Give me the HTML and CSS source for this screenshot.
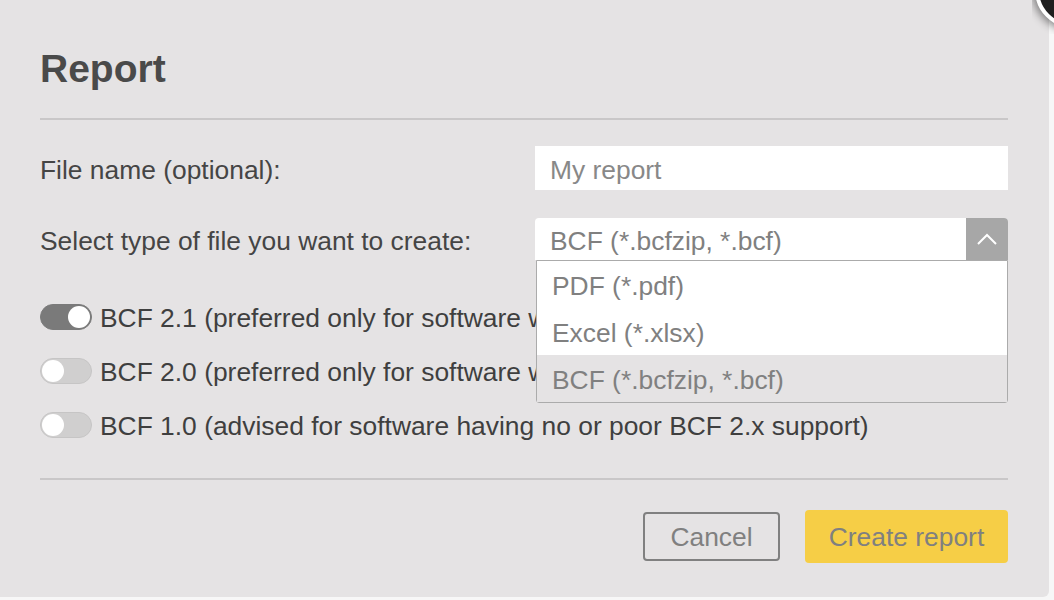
FILE: index.html
```html
<!DOCTYPE html>
<html lang="en">
  <head>
    <meta charset="UTF-8" />
    <meta name="viewport" content="width=device-width, initial-scale=1.0" />
    <title>Report</title>
    <link rel="stylesheet" href="styles.css">
  </head>
  <body>
    <div class="dialog flex column">
      <div class="close-wrap"><div class="close"></div></div>
      <h1 class="title">Report</h1>
      <div class="line"></div>

      <div class="row flex space">
        <label class="label">File name (optional):</label>
        <input type="text" class="input" placeholder="My report" />
      </div>

      <div class="row row-select flex space">
        <label class="label">Select type of file you want to create:</label>
        <div class="select">
          <div class="select-box flex">
            <span class="select-value">BCF (*.bcfzip, *.bcf)</span>
            <span class="select-arrow flex center">
              <svg width="22" height="12" viewBox="0 0 22 12">
                <path d="M2 11 L11 2 L20 11" fill="none" stroke="#fff" stroke-width="2" />
              </svg>
            </span>
          </div>
          <ul class="options">
            <li>PDF (*.pdf)</li>
            <li>Excel (*.xlsx)</li>
            <li class="active">BCF (*.bcfzip, *.bcf)</li>
          </ul>
        </div>
      </div>

      <div class="versions flex column">
        <div class="version flex">
          <span class="toggle on"></span>
          <span class="version-text">BCF 2.1 (preferred only for software with full BCF 2.1 support)</span>
        </div>
        <div class="version flex">
          <span class="toggle"></span>
          <span class="version-text">BCF 2.0 (preferred only for software with full BCF 2.0 support)</span>
        </div>
        <div class="version flex">
          <span class="toggle"></span>
          <span class="version-text">BCF 1.0 (advised for software having no or poor BCF 2.x support)</span>
        </div>
      </div>

      <div class="line"></div>

      <div class="buttons flex">
        <button class="btn cancel">Cancel</button>
        <button class="btn create">Create report</button>
      </div>
    </div>
  </body>
</html>
```

FILE: styles.css
```css
* {
  margin: 0;
  padding: 0;
  box-sizing: border-box;
}
body {
  background-color: #f7f7f7;
  font-family: "Liberation Sans", Arial, sans-serif;
  overflow: hidden;
}
.flex {
  display: flex;
}
.space {
  justify-content: space-between;
  align-items: center;
}
.center {
  justify-content: center;
  align-items: center;
}
.column {
  flex-direction: column;
}

.dialog {
  position: relative;
  width: 1049px;
  height: 597px;
  padding: 0 41px 0 40px;
  background-color: #e5e3e4;
  border-bottom-right-radius: 6px;
}
/* close button sits over the corner, only a piece of it shows */
.dialog .close-wrap {
  position: absolute;
  top: 0;
  right: -5px;
  width: 22px;
  height: 34px;
  overflow: hidden;
}
.dialog .close {
  position: absolute;
  top: -48px;
  left: 3px;
  width: 76px;
  height: 76px;
  border-radius: 50%;
  background-color: #1f1f1f;
  border: 4px solid #fff;
  box-shadow: 0 0 8px 3px rgba(0, 0, 0, 0.45);
}
.dialog .title {
  margin-top: 45px;
  height: 48px;
  line-height: 48px;
  font-size: 39px;
  font-weight: bold;
  color: #4a4a4a;
}
.dialog .line {
  height: 2px;
  background-color: #c9c7c8;
}
.dialog .title + .line {
  margin-top: 25px;
}

.dialog .row {
  margin-top: 26px;
}
.dialog .row-select {
  margin-top: 28px;
}
.dialog .label {
  font-size: 26.4px;
  color: #454545;
  padding-top: 4px;
}
.dialog .input {
  width: 473px;
  height: 44px;
  border: none;
  outline: none;
  padding-left: 15px;
  padding-top: 4px;
  font-family: inherit;
  font-size: 26.4px;
  color: #888;
  background-color: #fff;
}
.dialog .input::placeholder {
  color: #888;
}

.select {
  position: relative;
  width: 473px;
}
.select .select-box {
  height: 42px;
  background-color: #fff;
  border-radius: 4px 4px 0 0;
  overflow: hidden;
}
.select .select-value {
  flex: 1;
  padding-left: 15px;
  line-height: 46px;
  font-size: 26.4px;
  color: #808080;
}
.select .select-arrow {
  width: 42px;
  background-color: #a7a7a7;
}
.select .options {
  position: absolute;
  top: 42px;
  left: 1px;
  right: 0;
  list-style: none;
  background-color: #fff;
  border: 1px solid #ababab;
  border-radius: 0 0 3px 3px;
  z-index: 2;
}
.select .options li {
  height: 47px;
  line-height: 50px;
  padding-left: 15px;
  font-size: 26.4px;
  color: #808080;
}
.select .options li.active {
  background-color: #e5e3e4;
}

.versions {
  margin-top: 44px;
  gap: 28px;
}
.version {
  height: 26px;
  align-items: center;
}
.toggle {
  position: relative;
  flex-shrink: 0;
  width: 52px;
  height: 26px;
  border-radius: 13px;
  background-color: #d0cfcf;
  border: 1px solid #c6c5c5;
  margin-right: 8px;
}
.toggle::after {
  content: "";
  position: absolute;
  top: 1px;
  left: 1px;
  width: 22px;
  height: 22px;
  border-radius: 50%;
  background-color: #fff;
}
.toggle.on {
  background-color: #7a7a7a;
  border-color: #7a7a7a;
}
.toggle.on::after {
  left: auto;
  right: 1px;
}
.version-text {
  font-size: 26.4px;
  line-height: 26px;
  padding-top: 2px;
  color: #3f3f3f;
  white-space: nowrap;
}

.versions + .line {
  margin-top: 40px;
}
.buttons {
  margin-top: 30px;
  justify-content: flex-end;
  align-items: center;
  gap: 25px;
}
.btn {
  font-family: inherit;
  font-size: 26.4px;
  color: #808080;
  border-radius: 4px;
  cursor: pointer;
  padding-top: 2px;
}
.btn.cancel {
  width: 137px;
  height: 49px;
  background-color: transparent;
  border: 2px solid #808080;
}
.btn.create {
  width: 203px;
  height: 53px;
  background-color: #f6ce46;
  border: none;
}
```
